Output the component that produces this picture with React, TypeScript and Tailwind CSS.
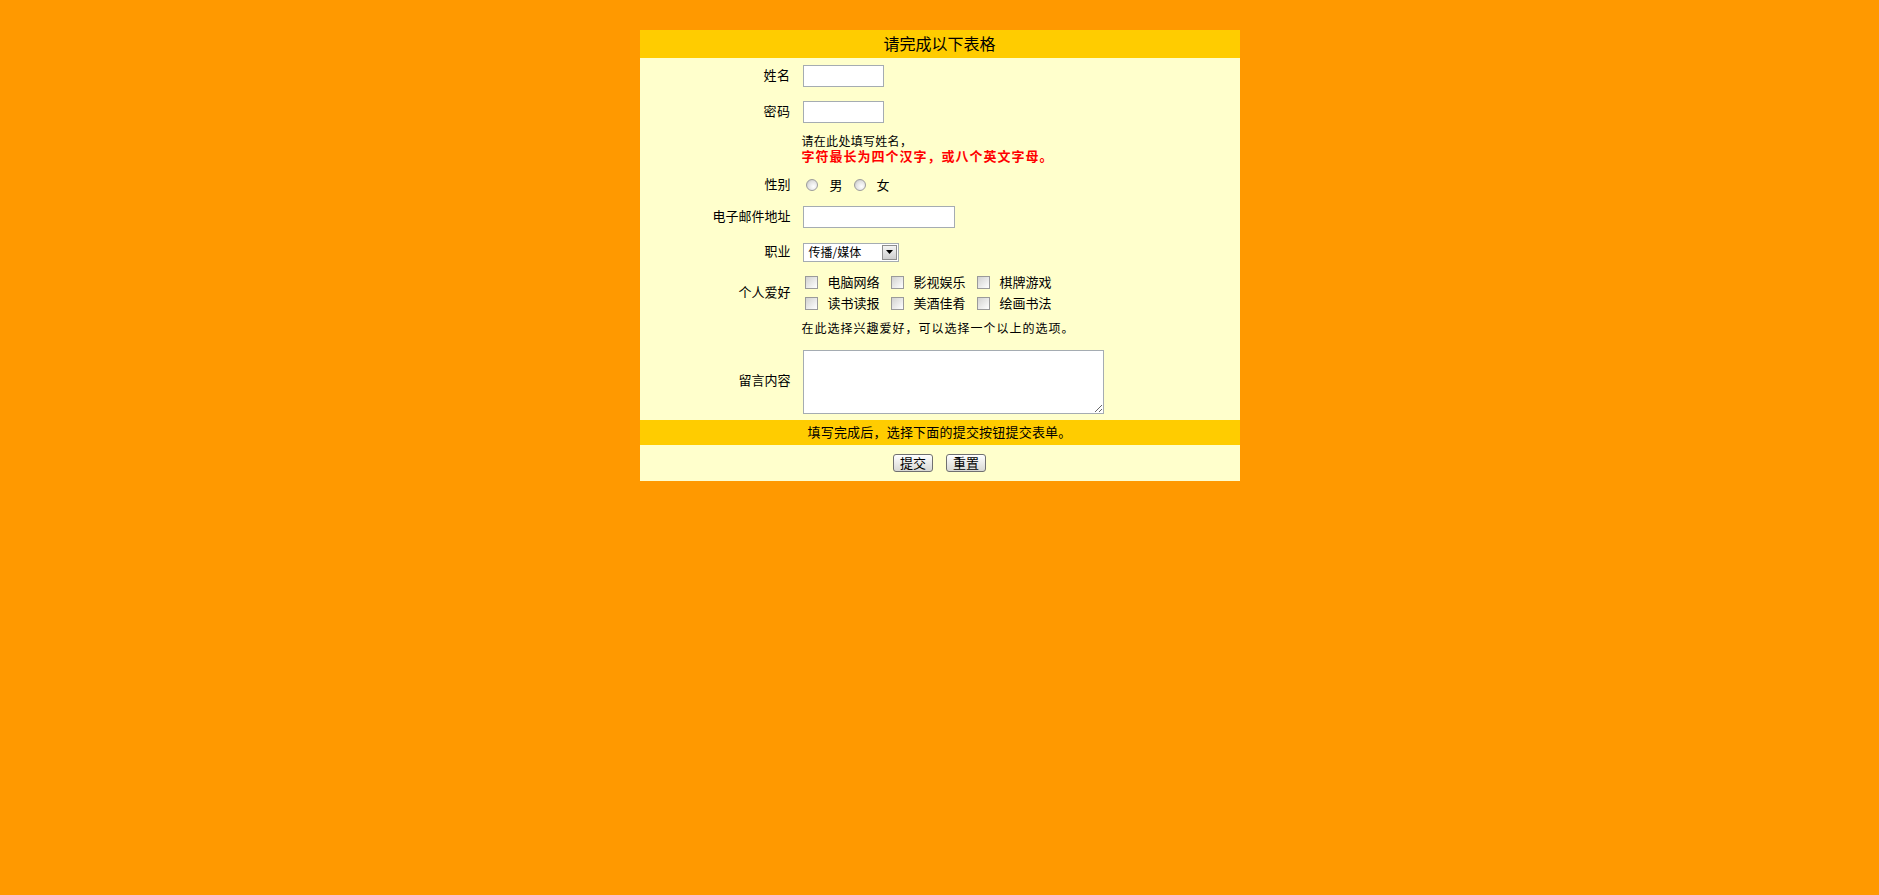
import React from "react";

function Radio() {
  return (
    <span className="inline-block w-[12px] h-[12px] rounded-full border border-[#9c9c9c] bg-[radial-gradient(circle_at_65%_65%,#ffffff_0%,#e2e2e2_55%,#b9b9b9_100%)]" />
  );
}

function Check() {
  return (
    <span className="inline-block w-[13px] h-[13px] border border-[#9a9a9a] bg-linear-to-br from-[#d2d2d0] to-white" />
  );
}

function Hobby({ text }: { text: string }) {
  return (
    <div className="flex w-[86px] items-center">
      <Check />
      <span className="ml-[10px] pb-[2px] text-[13px] leading-none">{text}</span>
    </div>
  );
}

export default function App() {
  return (
    <div className="min-h-screen bg-[#FF9900] pt-[30px] font-['Noto_Sans_CJK_SC','Noto_Sans',sans-serif] text-black">
      <div className="mx-auto w-[600px] bg-[#FFFFCC]">
        <div className="flex h-[28px] items-center justify-center bg-[#FFCC00] pb-[2px] text-[16px] leading-none">
          请完成以下表格
        </div>

        <div className="flex h-[36px] items-center">
          <div className="w-[151px] pb-[4px] text-right text-[13px] leading-none tracking-[0.5px]">姓名</div>
          <div className="ml-[12px]">
            <input className="block w-[81px] h-[22px] border border-[#a5acb2] bg-white" />
          </div>
        </div>

        <div className="flex h-[36px] items-center">
          <div className="w-[151px] pb-[4px] text-right text-[13px] leading-none tracking-[0.5px]">密码</div>
          <div className="ml-[12px]">
            <input type="password" className="block w-[81px] h-[22px] border border-[#a5acb2] bg-white" />
          </div>
        </div>

        <div className="flex h-[39px] items-center">
          <div className="w-[151px]" />
          <div className="ml-[11px] pb-[3px] leading-[15px]">
            <div className="text-[12px] tracking-[0.3px]">请在此处填写姓名，</div>
            <div className="text-[13px] font-bold tracking-[1px] text-[#FF0000]">
              字符最长为四个汉字，或八个英文字母。
            </div>
          </div>
        </div>

        <div className="flex h-[32px] items-center">
          <div className="w-[151px] pb-[4px] text-right text-[13px] leading-none">性别</div>
          <div className="ml-[12px] flex items-center">
            <span className="ml-[3px] flex">
              <Radio />
            </span>
            <span className="ml-[12px] pb-[2px] text-[13px] leading-none">男</span>
            <span className="ml-[11px] flex">
              <Radio />
            </span>
            <span className="ml-[11px] pb-[2px] text-[13px] leading-none">女</span>
          </div>
        </div>

        <div className="flex h-[32px] items-center">
          <div className="w-[151px] pb-[4px] text-right text-[13px] leading-none">电子邮件地址</div>
          <div className="ml-[12px]">
            <input className="block w-[152px] h-[22px] border border-[#a5acb2] bg-white" />
          </div>
        </div>

        <div className="flex h-[38px] items-center">
          <div className="w-[151px] pb-[4px] text-right text-[13px] leading-none">职业</div>
          <div className="ml-[12px]">
            <div className="flex w-[96px] h-[19px] items-center border border-[#a5acb2] bg-white">
              <span className="flex-1 pb-[1px] pl-[5px] text-[12px] leading-none">传播/媒体</span>
              <span className="mr-[1px] flex w-[15px] h-[15px] items-center justify-center border border-[#8e8e8e] bg-linear-to-b from-[#f4f4f4] to-[#cfcfcf]">
                <svg width="7" height="4" viewBox="0 0 7 4">
                  <path d="M0 0 H7 L3.5 4 Z" fill="#000" />
                </svg>
              </span>
            </div>
          </div>
        </div>

        <div className="flex h-[44px] items-center">
          <div className="w-[151px] pb-[4px] text-right text-[13px] leading-none">个人爱好</div>
          <div className="ml-[14px] flex flex-col gap-[6px]">
            <div className="flex">
              <Hobby text="电脑网络" />
              <Hobby text="影视娱乐" />
              <Hobby text="棋牌游戏" />
            </div>
            <div className="flex">
              <Hobby text="读书读报" />
              <Hobby text="美酒佳肴" />
              <Hobby text="绘画书法" />
            </div>
          </div>
        </div>

        <div className="flex h-[29px] items-center">
          <div className="w-[151px]" />
          <div className="ml-[11px] pb-[4px] text-[12px] leading-none tracking-[1px]">
            在此选择兴趣爱好，可以选择一个以上的选项。
          </div>
        </div>

        <div className="flex h-[76px] items-center">
          <div className="w-[151px] pb-[6px] text-right text-[13px] leading-none">留言内容</div>
          <div className="ml-[12px] flex">
            <textarea className="block w-[301px] h-[64px] border border-[#a5acb2] bg-white" />
          </div>
        </div>

        <div className="flex h-[25px] items-center justify-center bg-[#FFCC00] pb-[3px] text-[13px] leading-none tracking-[0.2px]">
          填写完成后，选择下面的提交按钮提交表单。
        </div>

        <div className="flex h-[36px] items-center justify-center gap-[13px]">
          <button className="flex w-[40px] h-[18px] items-center justify-center rounded-[3px] border border-[#707070] bg-linear-to-b from-white to-[#d8d8d4] pb-[1px] text-[13px] leading-none">
            提交
          </button>
          <button className="flex w-[40px] h-[18px] items-center justify-center rounded-[3px] border border-[#707070] bg-linear-to-b from-white to-[#d8d8d4] pb-[1px] text-[13px] leading-none">
            重置
          </button>
        </div>
      </div>
    </div>
  );
}
